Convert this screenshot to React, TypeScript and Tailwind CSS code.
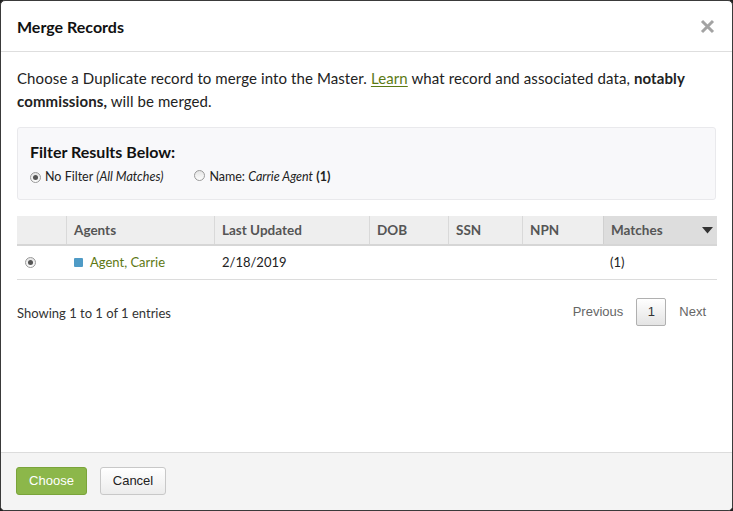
import React from 'react'

const cols = [
  { label: '', w: 'w-[50px]' },
  { label: 'Agents', w: 'w-[148px]' },
  { label: 'Last Updated', w: 'w-[155px]' },
  { label: 'DOB', w: 'w-[79px]' },
  { label: 'SSN', w: 'w-[74px]' },
  { label: 'NPN', w: 'w-[80px]' },
]

function Radio({ checked }: { checked?: boolean }) {
  return (
    <span className="inline-flex w-[11px] h-[11px] rounded-full border border-[#9a9a9a] bg-gradient-to-b from-[#e4e4e4] to-[#fdfdfd] items-center justify-center shrink-0">
      {checked && <span className="w-[5px] h-[5px] rounded-full bg-[#555]" />}
    </span>
  )
}

export default function App() {
  return (
    <div className="w-[733px] h-[511px] bg-[#1e1e1e]" style={{ fontFamily: 'Lato, "Open Sans", sans-serif' }}>
      <div className="w-full h-full bg-white border border-[#3a3a3a] rounded-[5px] flex flex-col overflow-hidden text-[#222]">
        {/* Header */}
        <div className="h-[51px] shrink-0 border-b border-[#dedede] flex items-center justify-between pl-[16px] pr-[17px]">
          <h2 className="text-[16px] font-bold text-[#111] mt-[2px]">Merge Records</h2>
          <svg width="15" height="15" viewBox="0 0 15 15" className="mt-[1px]">
            <path d="M2 2 L13 13 M13 2 L2 13" stroke="#a3a3a3" strokeWidth="3" strokeLinecap="butt" />
          </svg>
        </div>

        {/* Body */}
        <div className="flex-1 px-[16px] pt-[15px]">
          <p className="text-[15px] leading-[23px] tracking-[0.1px] text-[#222]">
            Choose a Duplicate record to merge into the Master.{' '}
            <a className="text-[#5b7a14] underline underline-offset-2">Learn</a> what record and associated data,{' '}
            <b>notably</b>
            <br />
            <b>commissions,</b> will be merged.
          </p>

          <div className="mt-[14px] h-[73px] bg-[#f8f8fa] border border-[#e9e9ec] rounded-[3px] pl-[12px] pt-[14px]">
            <div className="text-[16px] leading-[20px] font-bold text-[#111]">Filter Results Below:</div>
            <div className="mt-[7px] flex items-center text-[12.5px] leading-[16px] text-[#222]">
              <Radio checked />
              <span className="ml-[4px]">
                No Filter <i>(All Matches)</i>
              </span>
              <span className="ml-[31px]">
                <Radio />
              </span>
              <span className="ml-[4px]">
                Name: <i>Carrie Agent</i> <b>(1)</b>
              </span>
            </div>
          </div>

          {/* Table */}
          <div className="mt-[16px] w-[700px]">
            <div className="flex h-[30px] border-b-2 border-[#d6d6d6] text-[13.5px] font-bold text-[#555]">
              {cols.map((c, i) => (
                <div
                  key={i}
                  className={`${c.w} bg-[#eeeeee] flex items-center pl-[7px] ${i < cols.length - 1 ? 'border-r border-[#d9d9d9]' : ''}`}
                >
                  {c.label}
                </div>
              ))}
              <div className="flex-1 bg-[#dddddd] border-l border-[#d0d0d0] flex items-center justify-between pl-[7px] pr-[4px]">
                <span>Matches</span>
                <svg width="11" height="7" viewBox="0 0 11 7">
                  <path d="M0 0 H11 L5.5 6.5 Z" fill="#333" />
                </svg>
              </div>
            </div>
            <div className="flex h-[34px] border-b border-[#dcdcdc] items-center text-[13px]">
              <div className="w-[50px] pl-[8px] flex items-center">
                <Radio checked />
              </div>
              <div className="w-[148px] pl-[7px] flex items-center gap-[7px]">
                <span className="w-[9px] h-[9px] bg-[#4f9bc6] rounded-[1px]" />
                <span className="text-[#5e7813]">Agent, Carrie</span>
              </div>
              <div className="w-[155px] pl-[7px]">2/18/2019</div>
              <div className="w-[79px]" />
              <div className="w-[74px]" />
              <div className="w-[80px]" />
              <div className="flex-1 pl-[7px]">(1)</div>
            </div>
          </div>

          <div className="mt-[18px] w-[700px] flex items-center justify-between">
            <span className="text-[13px] text-[#333] mt-[3px]">Showing 1 to 1 of 1 entries</span>
            <div className="flex items-center text-[13px] text-[#666] pr-[11px]" style={{ fontFamily: '"Liberation Sans", Arial, sans-serif' }}>
              <span>Previous</span>
              <span className="ml-[13px] w-[30px] h-[28px] flex items-center justify-center border border-[#b0b0b0] rounded-[2px] bg-gradient-to-b from-white to-[#e4e4e4] text-[#333]">
                1
              </span>
              <span className="ml-[13px]">Next</span>
            </div>
          </div>
        </div>

        {/* Footer */}
        <div className="h-[58px] shrink-0 bg-[#f4f4f4] border-t border-[#dcdcdc] flex items-start pl-[15px] pt-[14px] gap-[13px]" style={{ fontFamily: '"Liberation Sans", Arial, sans-serif' }}>
          <button className="h-[28px] w-[71px] rounded-[3px] bg-[#8cb74a] border border-[#7aa43a] text-white text-[13px]">
            Choose
          </button>
          <button className="h-[28px] w-[66px] rounded-[3px] bg-gradient-to-b from-white to-[#ececec] border border-[#c8c8c8] text-[#222] text-[13px]">
            Cancel
          </button>
        </div>
      </div>
    </div>
  )
}
